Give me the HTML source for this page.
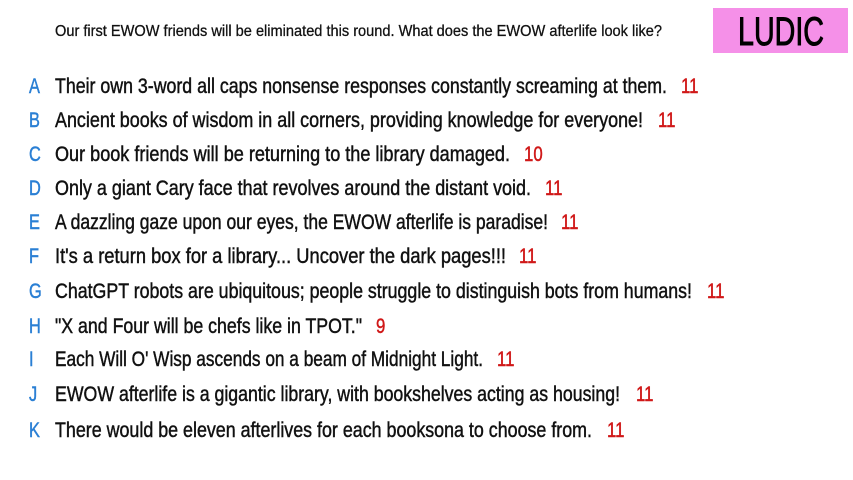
<!DOCTYPE html>
<html><head><meta charset="utf-8"><style>
html,body{margin:0;padding:0;background:#fff;width:853px;height:480px;overflow:hidden;position:relative;font-family:"Liberation Sans Narrow","Liberation Sans",sans-serif;}
.s{position:absolute;white-space:nowrap;line-height:1;transform-origin:0 50%;-webkit-text-stroke:0.45px currentColor;}
.l{color:#2a7fd4;font-size:21px;transform:scaleX(0.78);}
.t{color:#111;font-size:21px;}
.n{color:#d01818;font-size:21px;transform:scaleX(0.8);}
.box{position:absolute;left:713px;top:8px;width:135px;height:45px;background:#f590e8;}
</style></head><body>
<div class="s t" data-w="607" style="left:55px;top:24px;font-size:16px;-webkit-text-stroke:0.3px #111">Our first EWOW friends will be eliminated this round. What does the EWOW afterlife look like?</div>
<div class="box"></div>
<div class="s" data-w="86" style="left:738px;top:12px;font-size:40px;color:#000;-webkit-text-stroke:1px #000">LUDIC</div>
<div id="rows"></div>
<script>
var rows=[
["A","Their own 3-word all caps nonsense responses constantly screaming at them.",667,"11",681,87],
["B","Ancient books of wisdom in all corners, providing knowledge for everyone!",643,"11",658,121],
["C","Our book friends will be returning to the library damaged.",510,"10",524,155],
["D","Only a giant Cary face that revolves around the distant void.",531,"11",545,189],
["E","A dazzling gaze upon our eyes, the EWOW afterlife is paradise!",548,"11",561,223],
["F","It's a return box for a library... Uncover the dark pages!!!",506,"11",519,257],
["G","ChatGPT robots are ubiquitous; people struggle to distinguish bots from humans!",692,"11",707,292],
["H","\"X and Four will be chefs like in TPOT.\"",362,"9",376,327],
["I","Each Will O' Wisp ascends on a beam of Midnight Light.",483,"11",497,360],
["J","EWOW afterlife is a gigantic library, with bookshelves acting as housing!",620,"11",636,395],
["K","There would be eleven afterlives for each booksona to choose from.",592,"11",607,431]];
var h='';
rows.forEach(function(r){
 var top=r[5]-11;
 h+='<div class="s l" style="left:29px;top:'+top+'px">'+r[0]+'</div>';
 h+='<div class="s t" data-w="'+(r[2]-55)+'" style="left:55px;top:'+top+'px"></div>';
 h+='<div class="s n" style="left:'+r[4]+'px;top:'+top+'px">'+r[3]+'</div>';
});
document.getElementById('rows').innerHTML=h;
var ts=document.querySelectorAll('#rows .t');
rows.forEach(function(r,i){ts[i].textContent=r[1];});
document.querySelectorAll('[data-w]').forEach(function(e){
 var w=e.getBoundingClientRect().width, t=parseFloat(e.getAttribute('data-w'));
 if(w>0&&t>0) e.style.transform='scaleX('+(t/w)+')';
});
</script>
</body></html>
